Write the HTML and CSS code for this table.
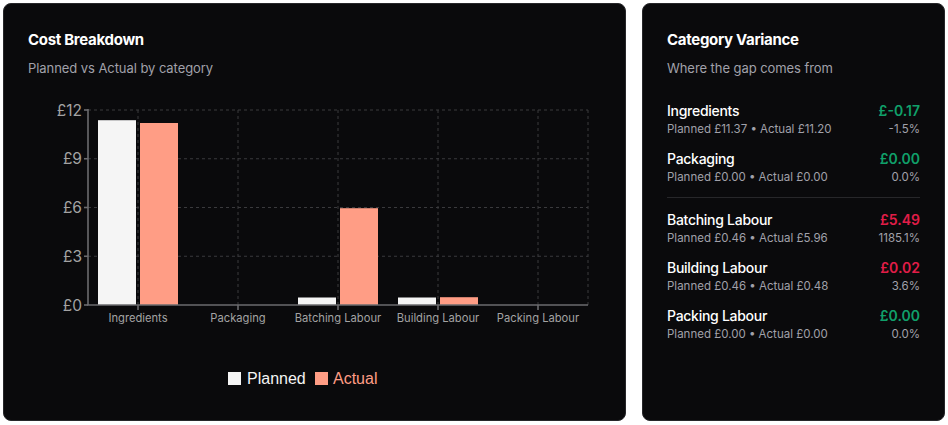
FILE: index.html
```html
<!DOCTYPE html>
<html lang="en">
<head>
<meta charset="utf-8">
<title>Cost Breakdown</title>
<link rel="stylesheet" href="styles.css">
</head>
<body>
<main class="layout">
  <section class="card chart-card">
    <h2 class="card-title">Cost Breakdown</h2>
    <p class="card-sub">Planned vs Actual by category</p>
    <svg class="chart" width="575" height="300" viewBox="0 0 575 300">
      <g class="grid">
        <line x1="60" y1="15" x2="560" y2="15"/>
        <line x1="60" y1="63.75" x2="560" y2="63.75"/>
        <line x1="60" y1="112.5" x2="560" y2="112.5"/>
        <line x1="60" y1="161.25" x2="560" y2="161.25"/>
        <line x1="110" y1="15" x2="110" y2="210"/>
        <line x1="210" y1="15" x2="210" y2="210"/>
        <line x1="310" y1="15" x2="310" y2="210"/>
        <line x1="410" y1="15" x2="410" y2="210"/>
        <line x1="510" y1="15" x2="510" y2="210"/>
        <line x1="560" y1="15" x2="560" y2="210"/>
      </g>
      <g class="bars">
        <rect class="planned" x="70" y="25.2" width="38" height="184.8"/>
        <rect class="actual" x="112" y="28" width="38" height="182"/>
        <rect class="planned" x="270" y="202.5" width="38" height="7.5"/>
        <rect class="actual" x="312" y="113.2" width="38" height="96.8"/>
        <rect class="planned" x="370" y="202.5" width="38" height="7.5"/>
        <rect class="actual" x="412" y="202.2" width="38" height="7.8"/>
      </g>
      <g class="axis">
        <line x1="60" y1="14" x2="60" y2="210"/>
        <line x1="59" y1="210" x2="560" y2="210"/>
        <line x1="56" y1="15" x2="60" y2="15"/>
        <line x1="56" y1="63.75" x2="60" y2="63.75"/>
        <line x1="56" y1="112.5" x2="60" y2="112.5"/>
        <line x1="56" y1="161.25" x2="60" y2="161.25"/>
        <line x1="56" y1="210" x2="60" y2="210"/>
        <line x1="110" y1="210" x2="110" y2="215"/>
        <line x1="210" y1="210" x2="210" y2="215"/>
        <line x1="310" y1="210" x2="310" y2="215"/>
        <line x1="410" y1="210" x2="410" y2="215"/>
        <line x1="510" y1="210" x2="510" y2="215"/>
      </g>
      <g class="ylabels">
        <text x="54" y="20.5">£12</text>
        <text x="54" y="69.25">£9</text>
        <text x="54" y="118">£6</text>
        <text x="54" y="166.75">£3</text>
        <text x="54" y="215.5">£0</text>
      </g>
      <g class="xlabels">
        <text x="110" y="227">Ingredients</text>
        <text x="210" y="227">Packaging</text>
        <text x="310" y="227">Batching Labour</text>
        <text x="410" y="227">Building Labour</text>
        <text x="510" y="227">Packing Labour</text>
      </g>
      <g class="legend">
        <rect class="planned" x="200" y="277" width="13" height="13"/>
        <text class="legend-planned" x="219" y="289">Planned</text>
        <rect class="actual" x="287" y="277" width="13" height="13"/>
        <text class="legend-actual" x="305" y="289">Actual</text>
      </g>
    </svg>
  </section>

  <section class="card variance-card">
    <h2 class="card-title">Category Variance</h2>
    <p class="card-sub">Where the gap comes from</p>
    <ul class="rows">
      <li class="row">
        <div class="row-main"><span class="row-name">Ingredients</span><span class="row-value good">£-0.17</span></div>
        <div class="row-detail"><span>Planned £11.37 • Actual £11.20</span><span>-1.5%</span></div>
      </li>
      <li class="row">
        <div class="row-main"><span class="row-name">Packaging</span><span class="row-value good">£0.00</span></div>
        <div class="row-detail"><span>Planned £0.00 • Actual £0.00</span><span>0.0%</span></div>
      </li>
      <li class="divider"></li>
      <li class="row">
        <div class="row-main"><span class="row-name">Batching Labour</span><span class="row-value bad">£5.49</span></div>
        <div class="row-detail"><span>Planned £0.46 • Actual £5.96</span><span>1185.1%</span></div>
      </li>
      <li class="row">
        <div class="row-main"><span class="row-name">Building Labour</span><span class="row-value bad">£0.02</span></div>
        <div class="row-detail"><span>Planned £0.46 • Actual £0.48</span><span>3.6%</span></div>
      </li>
      <li class="row">
        <div class="row-main"><span class="row-name">Packing Labour</span><span class="row-value good">£0.00</span></div>
        <div class="row-detail"><span>Planned £0.00 • Actual £0.00</span><span>0.0%</span></div>
      </li>
    </ul>
  </section>
</main>
</body>
</html>
```

FILE: styles.css
```css
* { box-sizing: border-box; }

html, body {
  margin: 0;
  padding: 0;
  background: #ffffff;
}

body {
  font-family: Inter, "Noto Sans", sans-serif;
  color: #fafafa;
}

.layout {
  display: flex;
  gap: 16px;
  padding: 3px;
  height: 425px;
  align-items: flex-start;
}

.card {
  background: #0a0a0c;
  border: 1px solid #27272a;
  border-radius: 8px;
  height: 418px;
  padding: 24px;
}

.chart-card { width: 623px; }
.variance-card { width: 303px; }

.card-title {
  margin: 0;
  font-size: 15px;
  line-height: 24px;
  font-weight: 700;
  letter-spacing: -0.02em;
  color: #ffffff;
}

.card-sub {
  margin: 6px 0 0;
  font-size: 13px;
  line-height: 20px;
  color: #a1a1aa;
  letter-spacing: -0.005em;
}

.chart {
  display: block;
  margin-top: 17px;
}

.grid line {
  stroke: #3a3a3d;
  stroke-width: 1;
  stroke-dasharray: 3 3;
}

.axis line {
  stroke: #6b6b6e;
  stroke-width: 1.6;
}

.planned { fill: #f5f5f5; }
.actual { fill: #ff9d85; }

.ylabels text {
  font-size: 15.5px;
  fill: #a3a3a3;
  text-anchor: end;
}

.xlabels text {
  font-size: 11.2px;
  fill: #a3a3a3;
  text-anchor: middle;
}

.legend text {
  font-family: "Liberation Sans", Arial, sans-serif;
  font-size: 16px;
}
.legend-planned { fill: #f5f5f5; }
.legend-actual { fill: #ff9d85; }

.rows {
  list-style: none;
  margin: 23px 0 0;
  padding: 0;
  display: flex;
  flex-direction: column;
  gap: 12px;
}

.row {
  display: flex;
  flex-direction: column;
}

.row-main {
  display: flex;
  justify-content: space-between;
  align-items: baseline;
  line-height: 20px;
}

.row-name {
  font-size: 14px;
  font-weight: 500;
  color: #ffffff;
  letter-spacing: -0.02em;
}

.row-value {
  font-size: 14px;
  font-weight: 600;
}

.good { color: #10a06a; }
.bad { color: #e11d48; }

.row-detail {
  display: flex;
  justify-content: space-between;
  font-size: 11.5px;
  line-height: 16px;
  color: #a1a1aa;
}

.divider {
  height: 1px;
  background: #27272a;
}
```
